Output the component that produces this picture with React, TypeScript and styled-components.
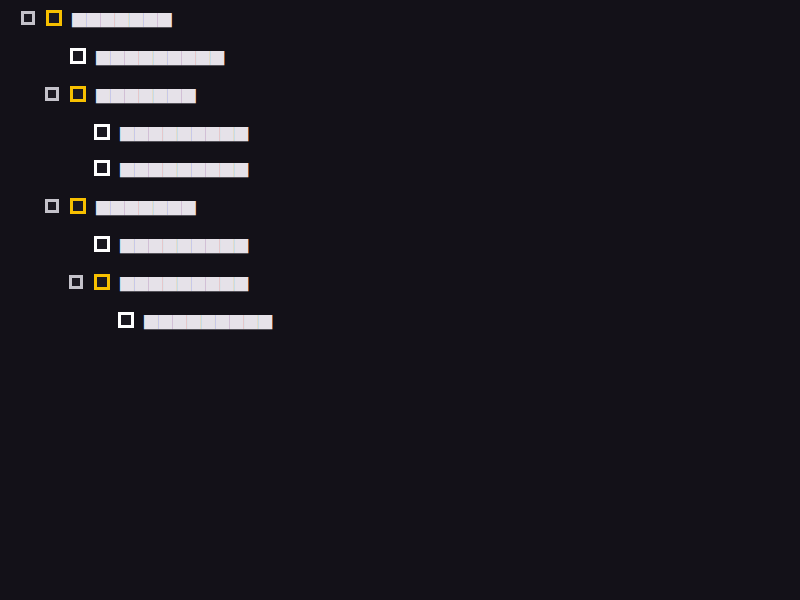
import styled, { createGlobalStyle } from "styled-components";

type Node = {
    id: string;
    label: string;
    children?: Node[];
};

const tree: Node[] = [
    {
        id: "a",
        label: "███████",
        children: [
            { id: "a1", label: "█████████" },
            {
                id: "a2",
                label: "███████",
                children: [
                    { id: "a2a", label: "█████████" },
                    { id: "a2b", label: "█████████" },
                ],
            },
            {
                id: "a3",
                label: "███████",
                children: [
                    { id: "a3a", label: "█████████" },
                    {
                        id: "a3b",
                        label: "█████████",
                        children: [{ id: "a3b1", label: "█████████" }],
                    },
                ],
            },
        ],
    },
];

const GlobalStyle = createGlobalStyle`
    html, body {
        margin: 0;
        padding: 0;
        background: #131118;
        height: 100%;
    }
    #root {
        min-height: 100vh;
        background: #131118;
    }
`;

const TreeList = styled.ul`
    list-style: none;
    margin: 0;
    padding: 0;
`;

const Row = styled.div<{ $depth: number; $parent: boolean }>`
    display: flex;
    align-items: center;
    height: ${(p) => (p.$parent ? 40 : 36)}px;
    padding-left: ${(p) => 16 + p.$depth * 24}px;
    box-sizing: border-box;
`;

const ToggleSlot = styled.span`
    display: flex;
    align-items: center;
    justify-content: center;
    width: 24px;
    height: 24px;
    margin-top: -5px;
    margin-right: 6px;
    flex-shrink: 0;
`;

const Toggle = styled.span`
    width: 14px;
    height: 14px;
    box-sizing: border-box;
    border: 3px solid #c4c2ca;
    background: #1a1820;
`;

const Checkbox = styled.span<{ $accent: boolean }>`
    width: 16px;
    height: 16px;
    margin-top: -5px;
    margin-right: 10px;
    box-sizing: border-box;
    flex-shrink: 0;
    border: 3px solid ${(p) => (p.$accent ? "#f7c000" : "#ffffff")};
    background: #1a1820;
`;

const Label = styled.span`
    font-family: "Noto Sans CJK SC", "DejaVu Sans", sans-serif;
    font-size: 14.25px;
    line-height: 16px;
    color: #e6e2e9;
    white-space: nowrap;
`;

function TreeItem({ node, depth }: { node: Node; depth: number }) {
    const isParent = !!node.children;
    return (
        <li>
            <Row $depth={depth} $parent={isParent}>
                <ToggleSlot>{isParent && <Toggle />}</ToggleSlot>
                <Checkbox $accent={isParent} />
                <Label>{node.label}</Label>
            </Row>
            {node.children && (
                <TreeList>
                    {node.children.map((child) => (
                        <TreeItem key={child.id} node={child} depth={depth + 1} />
                    ))}
                </TreeList>
            )}
        </li>
    );
}

export default function App() {
    return (
        <>
            <GlobalStyle />
            <TreeList>
                {tree.map((node) => (
                    <TreeItem key={node.id} node={node} depth={0} />
                ))}
            </TreeList>
        </>
    );
}
